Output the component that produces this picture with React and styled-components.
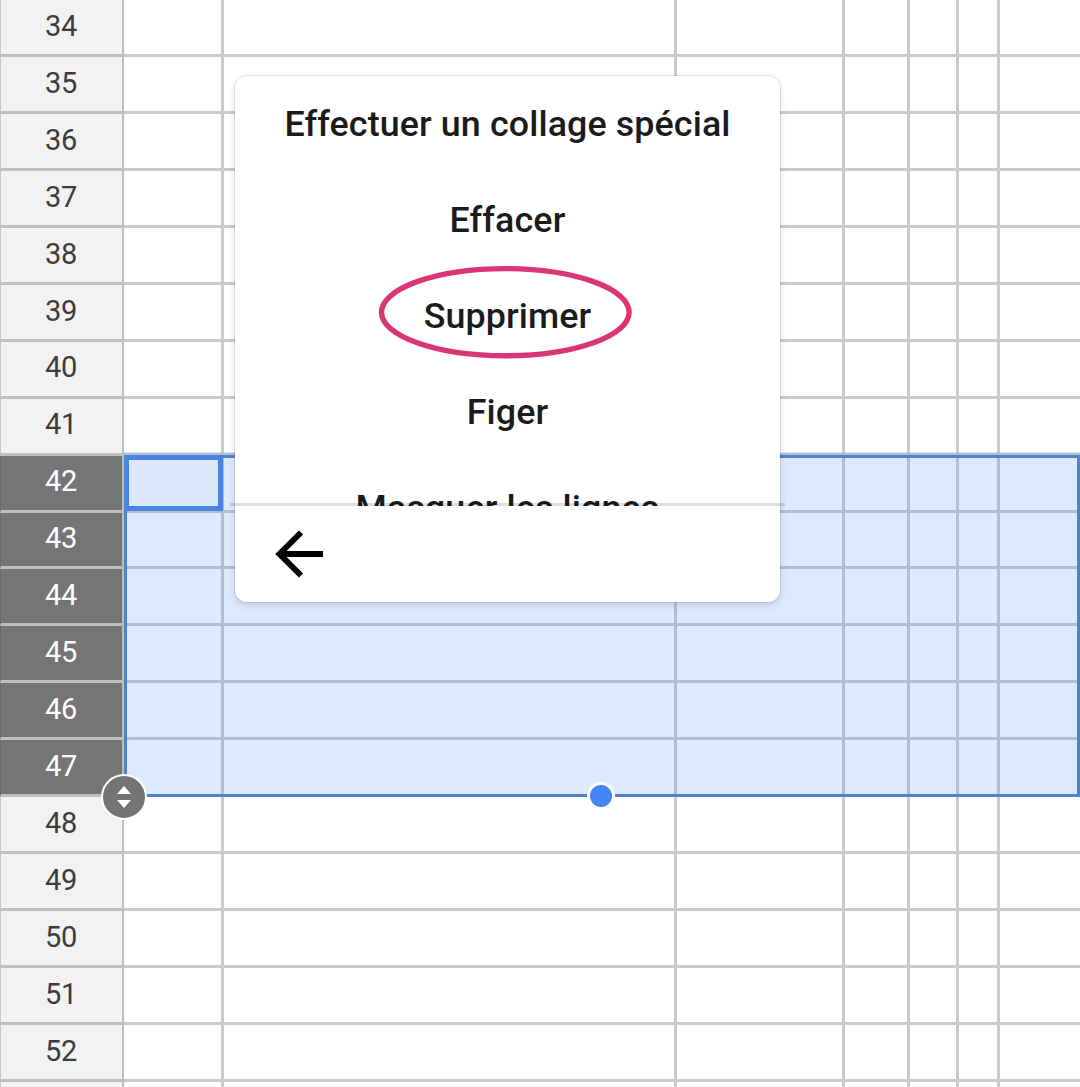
import React from "react";
import styled, { createGlobalStyle } from "styled-components";

const ROW_HEIGHT = 56.944;
const FIRST_ROW = 34;
const LAST_ROW = 52;
const ROWS = Array.from({ length: LAST_ROW - FIRST_ROW + 1 }, (_, i) => FIRST_ROW + i);
const COLUMNS = [100, 453, 168, 65, 49, 41, 80];
const isSelected = (n) => n >= 42 && n <= 47;

const GlobalStyle = createGlobalStyle`
  *, *::before, *::after { box-sizing: border-box; }
  body { margin: 0; background: #fff; font-family: Roboto, "Liberation Sans", sans-serif; }
`;

const Screen = styled.main`
  position: relative;
  width: 1080px;
  height: 1087px;
  overflow: hidden;
  background: #fff;
`;

const Sheet = styled.div`
  display: flex;
  flex-direction: column;
  height: 1087px;
`;

const Row = styled.div`
  display: flex;
  flex: none;
  height: ${(p) => (p.$first ? 57 : ROW_HEIGHT)}px;
`;

const TrailingRow = styled(Row)`
  flex: 1;
  height: auto;

  && > * { border-bottom: 0; }
`;

const RowHeader = styled.div`
  flex: none;
  width: 124px;
  display: flex;
  align-items: center;
  justify-content: center;
  padding: 0 1px 2.4px 0;
  border-left: 1px solid ${(p) => (p.$selected ? "#686868" : "#c6c6c6")};
  border-right: 2px solid #bebebe;
  border-bottom: 3px solid ${(p) => (p.$selected ? "#c0c0c0" : "#bfbfbf")};
  background: ${(p) => (p.$selected ? "#757575" : "#f2f2f2")};
  color: ${(p) => (p.$selected ? "#fff" : "#3c3c3c")};
  font-size: 29px;
  line-height: 34px;
  letter-spacing: -0.3px;
`;

const Cell = styled.div`
  flex: none;
  width: ${(p) => p.$width}px;
  border-right: ${(p) => (p.$last ? 0 : 3)}px solid #cacaca;
  border-bottom: 3px solid #cacaca;
`;

const Selection = styled.div`
  position: absolute;
  left: 124px;
  top: 452px;
  width: 956px;
  height: 345px;
  padding-top: 3px;
  background: rgba(66, 138, 242, 0.182);
`;

const SelectionFrame = styled.div`
  display: flex;
  align-items: flex-start;
  height: 100%;
  box-shadow: inset 0 0 0 3px #5083cc;
`;

const ActiveCell = styled.div`
  width: 99px;
  height: 56px;
  border: 5px solid #4a84e2;
  background: #dce9fc;
`;

const DragDot = styled.div`
  position: absolute;
  left: 463px;
  bottom: -13px;
  width: 28px;
  height: 28px;
  border: 3px solid #fff;
  border-radius: 50%;
  background: #4285f4;
`;

const RowHandle = styled.div`
  position: absolute;
  left: -23px;
  bottom: -23px;
  width: 46px;
  height: 46px;
  display: flex;
  align-items: center;
  justify-content: center;
  border: 2px solid #fff;
  border-radius: 50%;
  background: #747474;
`;

const Menu = styled.div`
  position: absolute;
  left: 235px;
  top: 76px;
  width: 545px;
  height: 526px;
  display: flex;
  flex-direction: column;
  border-radius: 12px;
  background: #fff;
  box-shadow: 0 0 0 1px rgba(0, 0, 0, 0.08), 0 3px 7px rgba(0, 0, 0, 0.14);
`;

const MenuList = styled.div`
  flex: none;
  height: 430px;
  overflow: hidden;
`;

const MenuItem = styled.div`
  height: 96px;
  display: flex;
  align-items: center;
  justify-content: center;
  padding-top: 1px;
  color: #1b1b1b;
  font-size: 35.8px;
  font-weight: 500;
  font-variant-ligatures: none;
  letter-spacing: 0.12px;
  line-height: 43px;
  white-space: nowrap;
`;

const MenuDivider = styled.div`
  flex: none;
  height: 3px;
  margin: -3px -5px 0;
  background: rgba(0, 0, 0, 0.125);
`;

const MenuFooter = styled.div`
  flex: 1;
  display: flex;
  align-items: center;
  padding-left: 40px;
`;

const Highlight = styled.svg`
  position: absolute;
  left: 143px;
  top: 188px;
`;

const ITEMS = ["Effectuer un collage spécial", "Effacer", "Supprimer", "Figer", "Masquer les lignes"];

function Cells() {
  return COLUMNS.map((w, i) => <Cell key={i} $width={w} $last={i === COLUMNS.length - 1} />);
}

export default function App() {
  return (
    <Screen>
      <GlobalStyle />
      <Sheet>
        {ROWS.map((n) => (
          <Row key={n} $first={n === FIRST_ROW}>
            <RowHeader $selected={isSelected(n)}>{n}</RowHeader>
            <Cells />
          </Row>
        ))}
        <TrailingRow>
          <RowHeader />
          <Cells />
        </TrailingRow>
      </Sheet>
      <Selection>
        <SelectionFrame>
          <ActiveCell />
        </SelectionFrame>
        <DragDot />
        <RowHandle>
          <svg width="16" height="24" viewBox="0 0 16 24" fill="#fff">
            <path d="M8 1 15 9H1zM8 23 1 15H15z" />
          </svg>
        </RowHandle>
      </Selection>
      <Menu>
        <MenuList>
          {ITEMS.map((label) => (
            <MenuItem key={label}>{label}</MenuItem>
          ))}
        </MenuList>
        <MenuDivider />
        <MenuFooter>
          <svg width="49" height="48" viewBox="0 0 49 48" fill="none" stroke="#000" strokeWidth="6">
            <path d="M48 24H5M26 2.5 4.5 24 26 45.5" />
          </svg>
        </MenuFooter>
        <Highlight width="256" height="96" viewBox="0 0 256 96" fill="none">
          <ellipse cx="127.3" cy="48.2" rx="123.8" ry="43.6" stroke="#da3673" strokeWidth="5.4" />
        </Highlight>
      </Menu>
    </Screen>
  );
}
